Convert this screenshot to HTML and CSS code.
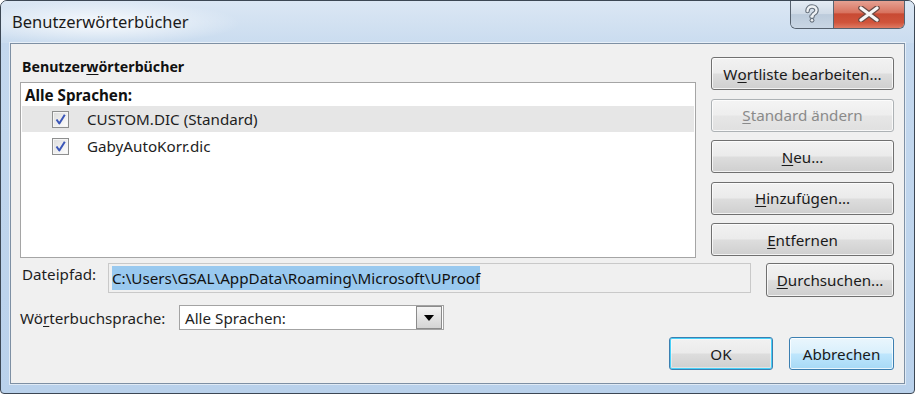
FILE: index.html
```html
<!DOCTYPE html>
<html lang="de">
<head>
<meta charset="utf-8">
<title>Benutzerwörterbücher</title>
<link rel="stylesheet" href="styles.css">
</head>
<body>
<div class="window">
  <div class="titlebar">
    <div class="title">Benutzerwörterbücher</div>
    <div class="caption-buttons">
      <div class="cap-btn help">
        <svg width="20" height="20" viewBox="0 0 20 20">
          <path d="M5.5 7 C5.5 3.5 8 2.5 10 2.5 C12.5 2.5 14.5 4 14.5 6.3 C14.5 8.5 12.8 9.2 11.6 10 C10.8 10.6 10.5 11 10.5 12.5 L9.5 12.5" fill="none" stroke="#66707c" stroke-width="4.6" stroke-linecap="round" stroke-linejoin="round"/>
          <circle cx="10" cy="16.3" r="2.4" fill="#66707c"/>
          <path d="M5.5 7 C5.5 3.5 8 2.5 10 2.5 C12.5 2.5 14.5 4 14.5 6.3 C14.5 8.5 12.8 9.2 11.6 10 C10.8 10.6 10.5 11 10.5 12.5 L9.5 12.5" fill="none" stroke="#eef1f4" stroke-width="2.4" stroke-linecap="round" stroke-linejoin="round"/>
          <circle cx="10" cy="16.3" r="1.3" fill="#eef1f4"/>
        </svg>
      </div>
      <div class="cap-btn close">
        <svg width="22" height="16" viewBox="0 0 22 16">
          <path d="M3 2 L19 14 M19 2 L3 14" stroke="#6a4a44" stroke-width="5.6" stroke-linecap="round"/>
          <path d="M3 2 L19 14 M19 2 L3 14" stroke="#f6f6f6" stroke-width="3.2" stroke-linecap="round"/>
        </svg>
      </div>
    </div>
  </div>
  <div class="client">
    <div class="top-row">
      <div class="list-col">
        <div class="group-label">Benutzer<u>w</u>örterbücher</div>
        <div class="listbox">
          <div class="list-header">Alle Sprachen:</div>
          <div class="list-item selected">
            <span class="checkbox"><svg width="13" height="13" viewBox="0 0 13 13"><path d="M2.5 6.5 L5.3 10.5 L10.8 1.8" fill="none" stroke="#3b56b8" stroke-width="2" stroke-linejoin="round"/></svg></span>
            <span class="item-text">CUSTOM.DIC (Standard)</span>
          </div>
          <div class="list-item">
            <span class="checkbox"><svg width="13" height="13" viewBox="0 0 13 13"><path d="M2.5 6.5 L5.3 10.5 L10.8 1.8" fill="none" stroke="#3b56b8" stroke-width="2" stroke-linejoin="round"/></svg></span>
            <span class="item-text">GabyAutoKorr.dic</span>
          </div>
        </div>
      </div>
      <div class="button-col">
        <div class="btn">W<u>o</u>rtliste bearbeiten...</div>
        <div class="btn disabled"><u>S</u>tandard ändern</div>
        <div class="btn"><u>N</u>eu...</div>
        <div class="btn"><u>H</u>inzufügen...</div>
        <div class="btn"><u>E</u>ntfernen</div>
      </div>
    </div>
    <div class="path-row">
      <div class="path-label">Dateipfad:</div>
      <div class="path-box"><span class="sel">C:\Users\GSAL\AppData\Roaming\Microsoft\UProof</span></div>
      <div class="btn browse"><u>D</u>urchsuchen...</div>
    </div>
    <div class="lang-row">
      <div class="lang-label">Wö<u>r</u>terbuchsprache:</div>
      <div class="select">
        <span class="select-text">Alle Sprachen:</span>
        <span class="select-arrow"><svg width="10" height="6" viewBox="0 0 10 6"><path d="M0 0 L10 0 L5 6 Z" fill="#000"/></svg></span>
      </div>
    </div>
    <div class="dialog-buttons">
      <div class="btn default ok">OK</div>
      <div class="btn hover cancel">Abbrechen</div>
    </div>
  </div>
</div>
</body>
</html>
```

FILE: styles.css
```css
* { box-sizing: border-box; }
html, body {
  margin: 0;
  padding: 0;
  background: #ffffff;
}
body {
  font-family: "Noto Sans", "Open Sans", "DejaVu Sans", sans-serif;
  font-size: 15.2px;
  color: #1e1e1e;
}
u { text-decoration: underline; text-underline-offset: 2px; text-decoration-thickness: 1px; }

.window {
  width: 915px;
  height: 394px;
  border: 1px solid #3c4754;
  border-radius: 7px 7px 4px 4px;
  background: linear-gradient(180deg, #d5e3f2 0px, #c4d8ee 40px, #b9d1eb 100%);
  display: flex;
  flex-direction: column;
  overflow: hidden;
}

.titlebar {
  height: 42px;
  display: flex;
  justify-content: space-between;
  align-items: flex-start;
  background:
    radial-gradient(ellipse 140px 22px at 100px 22px, rgba(255,255,255,0.85), rgba(255,255,255,0) 100%),
    linear-gradient(180deg, #dbe7f4 0%, #cadcef 100%);
}
.title {
  font-size: 16.5px;
  color: #1b1b1b;
  padding: 10px 0 0 11px;
  line-height: 22px;
}
.caption-buttons {
  display: flex;
  margin-right: 9px;
  margin-top: -1px;
  height: 29px;
  border: 1px solid #56616e;
  border-top: none;
  border-radius: 0 0 6px 6px;
  overflow: hidden;
}
.cap-btn {
  height: 28px;
  display: flex;
  align-items: center;
  justify-content: center;
}
.cap-btn.help {
  width: 43px;
  background: linear-gradient(180deg, #e6edf5 0%, #cfdae6 50%, #bccbdb 52%, #c9d6e4 100%);
  border-right: 1px solid #5a6470;
}
.cap-btn.close {
  width: 70px;
  background: linear-gradient(180deg, #e6a597 0%, #d8735f 45%, #c84a33 50%, #d0543b 80%, #df7a62 100%);
}

.client {
  flex: 1;
  margin: 0 9px 9px 9px;
  border: 1px solid #7e90a4;
  box-shadow: 0 0 0 1px rgba(255,255,255,0.55);
  background: #f0f0f0;
  padding: 13px 10px 0 9px;
  display: flex;
  flex-direction: column;
}

.top-row {
  display: flex;
  gap: 15px;
  height: 201px;
}
.list-col {
  width: 676px;
  display: flex;
  flex-direction: column;
}
.group-label {
  height: 25px;
  font-weight: bold;
  font-size: 14.2px;
  padding-left: 2px;
  line-height: 20px;
  color: #111;
}
.listbox {
  flex: 1;
  background: #ffffff;
  border: 1px solid #a5a5a5;
  padding: 0 1px;
}
.list-header {
  height: 23px;
  line-height: 24px;
  font-weight: bold;
  padding-left: 3px;
  color: #111;
}
.list-item {
  height: 26px;
  display: flex;
  align-items: center;
  margin-bottom: 1px;
}
.list-item.selected { background: #e6e6e6; }
.checkbox {
  width: 17px;
  height: 17px;
  margin-left: 30px;
  border: 1px solid #8e8f8f;
  background: linear-gradient(135deg, #dcdcdc 0%, #f4f4f4 70%, #ffffff 100%);
  box-shadow: inset 0 0 0 1px #f5f5f5;
  display: flex;
  align-items: center;
  justify-content: center;
}
.item-text {
  margin-left: 18px;
  color: #1e1e1e;
}

.button-col {
  width: 183px;
  display: flex;
  flex-direction: column;
  gap: 8.5px;
}
.btn {
  height: 33px;
  border: 1px solid #707070;
  border-radius: 3px;
  background: linear-gradient(180deg, #f2f2f2 0%, #ebebeb 48%, #dddddd 52%, #cfcfcf 100%);
  box-shadow: inset 0 0 0 1px rgba(255,255,255,0.75);
  display: flex;
  align-items: center;
  justify-content: center;
  color: #1a1a1a;
  white-space: nowrap;
}
.btn.disabled {
  border-color: #adb2b5;
  background: linear-gradient(180deg, #f4f4f4 0%, #eeeeee 48%, #e6e6e6 52%, #e0e0e0 100%);
  color: #8a8a8a;
}
.btn.default {
  border-color: #3c7fb1;
  box-shadow: inset 0 0 0 1px #48d0f8, inset 0 0 0 2px rgba(255,255,255,0.4);
}
.btn.hover {
  border-color: #3c7fb1;
  background: linear-gradient(180deg, #eaf6fd 0%, #d9f0fc 48%, #bee6fd 52%, #a7d9f5 100%);
}

.path-row {
  display: flex;
  align-items: flex-start;
  margin-top: 5px;
  height: 34px;
}
.path-label {
  width: 88px;
  padding-left: 2px;
  line-height: 22px;
}
.path-box {
  width: 643px;
  height: 30px;
  border: 1px solid #c9c9c9;
  background: #f0f0f0;
  padding: 2px 3px;
}
.sel {
  display: inline-block;
  background: #99c9ef;
  line-height: 24px;
  color: #111;
}
.btn.browse {
  width: 128px;
  height: 34px;
  margin-left: 15px;
}

.lang-row {
  display: flex;
  align-items: flex-start;
  margin-top: 8px;
  height: 25px;
}
.lang-label {
  width: 159px;
  line-height: 26px;
}
.select {
  width: 265px;
  height: 25px;
  border: 1px solid #a3a3a3;
  background: #ffffff;
  display: flex;
  align-items: center;
  justify-content: space-between;
  padding-left: 5px;
}
.select-arrow {
  width: 26px;
  height: 23px;
  border: 1px solid #8b8b8b;
  background: linear-gradient(180deg, #f4f4f4 0%, #e4e4e4 50%, #d4d4d4 100%);
  display: flex;
  align-items: center;
  justify-content: center;
  margin-right: 1px;
}

.dialog-buttons {
  display: flex;
  justify-content: flex-end;
  gap: 16px;
  margin-top: 7px;
}
.btn.ok { width: 104px; }
.btn.cancel { width: 105px; }
```
